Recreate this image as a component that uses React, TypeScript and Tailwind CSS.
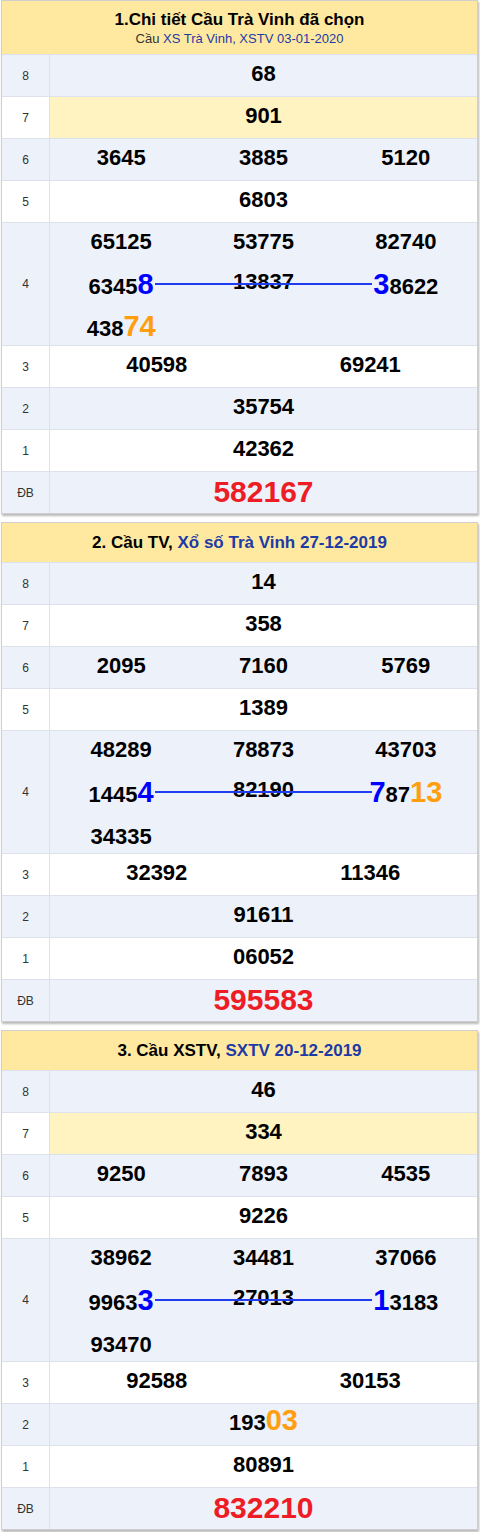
import type { ReactNode } from "react";

type RowProps = {
  label: string;
  bg?: string;
  cellBg?: string;
  labelBg?: string;
  children: ReactNode;
};

const Row = (props: RowProps) => {
  const { label, bg = "bg-white", cellBg, labelBg, children } = props;
  return (
    <div className="flex border-t border-[#dde2ea]">
      <div
        className={`w-[48px] shrink-0 flex items-center justify-center text-[12px] text-[#333] border-r border-[#dde2ea] ${labelBg ?? bg}`}
      >
        {label}
      </div>
      <div className={`flex-1 min-h-[41px] ${cellBg ?? bg}`}>{children}</div>
    </div>
  );
};

const Num = ({ children }: { children: ReactNode }) => (
  <span className="text-[22px] font-bold text-black">{children}</span>
);
const Blue = ({ children }: { children: ReactNode }) => (
  <span className="text-[29px] font-bold text-[#0000ff] leading-none">{children}</span>
);
const Orange = ({ children }: { children: ReactNode }) => (
  <span className="text-[29px] font-bold text-[#ff9f10] leading-none">{children}</span>
);

const Cols = ({ items, pad = "pb-[5px]" }: { items: ReactNode[]; pad?: string }) => (
  <div className={`grid h-[41px] ${pad} ${items.length === 3 ? "grid-cols-3" : items.length === 2 ? "grid-cols-2" : "grid-cols-1"}`}>
    {items.map((it, i) => (
      <div key={i} className="flex items-center justify-center">
        {it}
      </div>
    ))}
  </div>
);

type Fourth = {
  top: string[];
  mid: [ReactNode, string, ReactNode];
  last: ReactNode;
};

const FourthRow = ({ data }: { data: Fourth }) => (
  <div className="relative">
    <div className="grid grid-cols-3 h-[37px] items-center">
      {data.top.map((n) => (
        <div key={n} className="flex justify-center">
          <Num>{n}</Num>
        </div>
      ))}
    </div>
    <div className="grid grid-cols-3 h-[52px]">
      <div className="flex items-center justify-center">{data.mid[0]}</div>
      <div className="flex items-center justify-center pb-[9px]">
        <Num>{data.mid[1]}</Num>
      </div>
      <div className="flex items-center justify-center">{data.mid[2]}</div>
    </div>
    <div className="grid grid-cols-3 h-[33px] items-start">
      <div className="flex justify-center">{data.last}</div>
    </div>
    {/* connecting line */}
    <div className="absolute left-[105px] w-[217px] top-[60px] h-[2px] bg-[#1f3cf0]" />
  </div>
);

type Table = {
  header: ReactNode;
  headerH: string;
  r8: string;
  r7: string;
  r7yellow: boolean;
  r6: string[];
  r5: string;
  r4: Fourth;
  r3: string[];
  r2: ReactNode;
  r1: string;
  db: string;
};

const blue = "bg-[#edf1fa]";

const TableBox = ({ t }: { t: Table }) => (
  <div className="ml-[1px] mr-[2px] mb-[8px] border border-[#cfcfcf] shadow-[1px_2px_2px_rgba(0,0,0,0.28)] bg-white">
    <div className={`bg-[#ffe9a0] flex flex-col items-center justify-center ${t.headerH}`}>{t.header}</div>
    <Row label="8" bg={blue}>
      <Cols items={[<Num>{t.r8}</Num>]} />
    </Row>
    <Row label="7" cellBg={t.r7yellow ? "bg-[#fff3c2]" : "bg-white"} labelBg="bg-white">
      <Cols items={[<Num>{t.r7}</Num>]} />
    </Row>
    <Row label="6" bg={blue}>
      <Cols items={t.r6.map((n) => <Num>{n}</Num>)} />
    </Row>
    <Row label="5">
      <Cols items={[<Num>{t.r5}</Num>]} />
    </Row>
    <Row label="4" bg={blue}>
      <FourthRow data={t.r4} />
    </Row>
    <Row label="3">
      <Cols items={t.r3.map((n) => <Num>{n}</Num>)} />
    </Row>
    <Row label="2" bg={blue}>
      <Cols items={[t.r2]} />
    </Row>
    <Row label="1">
      <Cols items={[<Num>{t.r1}</Num>]} />
    </Row>
    <Row label="ĐB" bg={blue}>
      <Cols pad="pb-[1px]" items={[<span className="text-[30px] leading-none font-bold text-[#ee1c25]">{t.db}</span>]} />
    </Row>
  </div>
);

const linkBlue = "text-[#1d3aa6]";

const tables: Table[] = [
  {
    headerH: "h-[53px]",
    header: (
      <>
        <div className="text-[17px] font-bold text-black leading-[22px]">1.Chi tiết Cầu Trà Vinh đã chọn</div>
        <div className="text-[13px] text-[#333] leading-[16px]">
          Cầu <span className={linkBlue}>XS Trà Vinh, XSTV 03-01-2020</span>
        </div>
      </>
    ),
    r8: "68",
    r7: "901",
    r7yellow: true,
    r6: ["3645", "3885", "5120"],
    r5: "6803",
    r4: {
      top: ["65125", "53775", "82740"],
      mid: [
        <Num>
          6345<Blue>8</Blue>
        </Num>,
        "13837",
        <Num>
          <Blue>3</Blue>8622
        </Num>,
      ],
      last: (
        <Num>
          438<Orange>74</Orange>
        </Num>
      ),
    },
    r3: ["40598", "69241"],
    r2: <Num>35754</Num>,
    r1: "42362",
    db: "582167",
  },
  {
    headerH: "h-[39px]",
    header: (
      <div className="text-[17px] font-bold text-black">
        2. Cầu TV, <span className={linkBlue}>Xổ số Trà Vinh 27-12-2019</span>
      </div>
    ),
    r8: "14",
    r7: "358",
    r7yellow: false,
    r6: ["2095", "7160", "5769"],
    r5: "1389",
    r4: {
      top: ["48289", "78873", "43703"],
      mid: [
        <Num>
          1445<Blue>4</Blue>
        </Num>,
        "82190",
        <Num>
          <Blue>7</Blue>87<Orange>13</Orange>
        </Num>,
      ],
      last: <Num>34335</Num>,
    },
    r3: ["32392", "11346"],
    r2: <Num>91611</Num>,
    r1: "06052",
    db: "595583",
  },
  {
    headerH: "h-[39px]",
    header: (
      <div className="text-[17px] font-bold text-black">
        3. Cầu XSTV, <span className={linkBlue}>SXTV 20-12-2019</span>
      </div>
    ),
    r8: "46",
    r7: "334",
    r7yellow: true,
    r6: ["9250", "7893", "4535"],
    r5: "9226",
    r4: {
      top: ["38962", "34481", "37066"],
      mid: [
        <Num>
          9963<Blue>3</Blue>
        </Num>,
        "27013",
        <Num>
          <Blue>1</Blue>3183
        </Num>,
      ],
      last: <Num>93470</Num>,
    },
    r3: ["92588", "30153"],
    r2: (
      <Num>
        193<Orange>03</Orange>
      </Num>
    ),
    r1: "80891",
    db: "832210",
  },
];

export default function App() {
  return (
    <div className="w-[480px] bg-white font-['Liberation_Sans',Arial,sans-serif]">
      {tables.map((t, i) => (
        <TableBox key={i} t={t} />
      ))}
    </div>
  );
}
